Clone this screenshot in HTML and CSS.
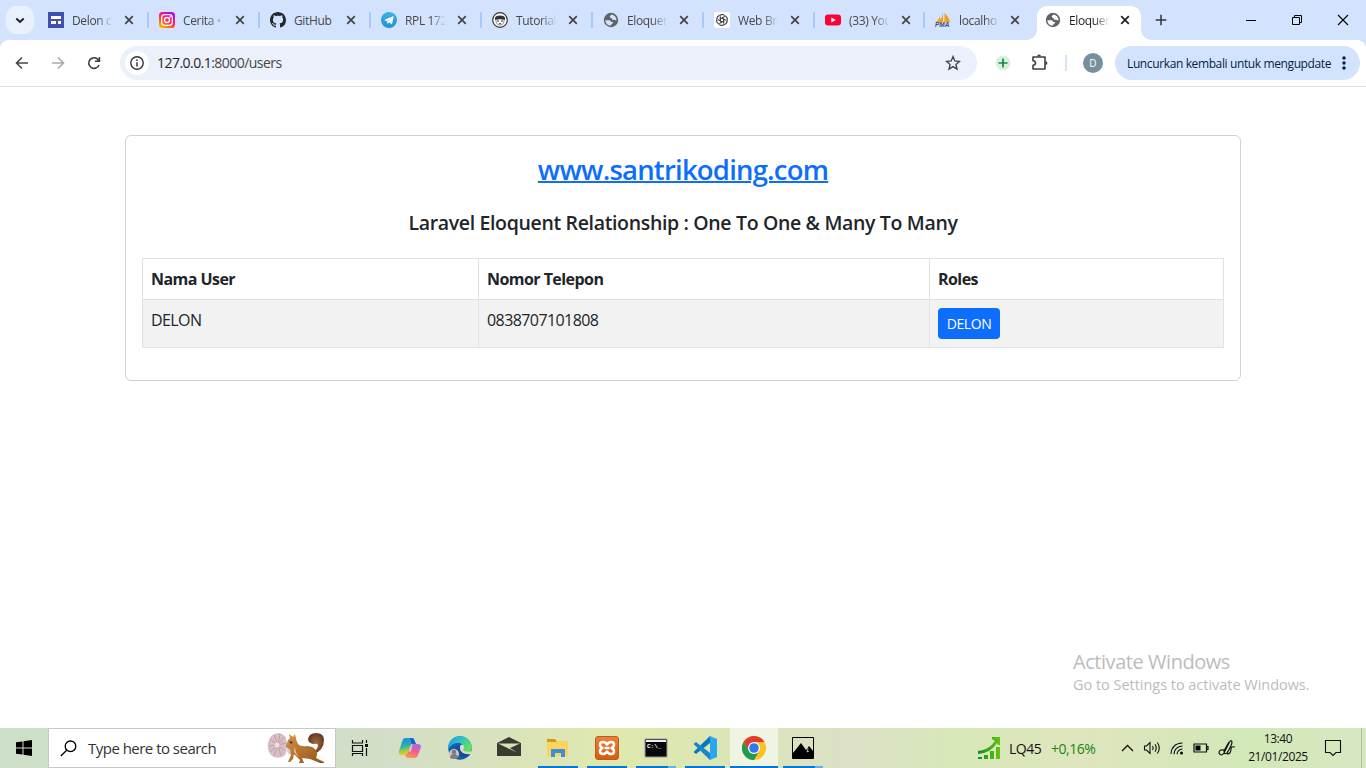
FILE: index.html
```html
<!DOCTYPE html>
<html lang="id">
<head>
<meta charset="utf-8">
<title>Eloquent</title>
<link rel="stylesheet" href="styles.css">
</head>
<body>
<svg class="defs" width="0" height="0">
  <defs>
    <symbol id="x" viewBox="0 0 10 10"><path d="M1.2 1.2l7.6 7.6M8.8 1.2L1.2 8.8" stroke="currentColor" stroke-width="1.7" fill="none"/></symbol>
    <symbol id="globe" viewBox="0 0 16 16"><circle cx="8" cy="8" r="7.200" fill="#5f6368"/><path d="M2.300 8.200h4c1.500 0 1.300 1.700 2.600 1.700h1.200v1.300c-1.500.2-1.800.7-1.800 2.400C4.500 13.700 2.600 11 2.300 8.200zM8.800 2.600c-1.200.8-1.900 1-2 2.200.2 1.200 1.700.8 2 1.900.2 1 .8 1.200 1.900 1.100 1-.1 1.300.9 2.900.4-.1-2.800-2.200-5-4.800-5.600z" fill="var(--hole,#d3e3fd)"/></symbol>
    <linearGradient id="ig" x1=".1" y1="1" x2=".7" y2="0"><stop offset="0" stop-color="#ffc700"/><stop offset=".35" stop-color="#ff5a20"/><stop offset=".65" stop-color="#ff1283"/><stop offset="1" stop-color="#a30df5"/></linearGradient>
    <linearGradient id="tg" x1="0" y1="0" x2="0" y2="1"><stop offset="0" stop-color="#3bb0e8"/><stop offset="1" stop-color="#1d93d2"/></linearGradient>
    <linearGradient id="cpa" x1="0" y1="0" x2=".2" y2="1"><stop offset="0" stop-color="#168be8"/><stop offset=".5" stop-color="#28b0b0"/><stop offset=".8" stop-color="#a7ce3b"/><stop offset="1" stop-color="#f5c62b"/></linearGradient>
    <linearGradient id="cpb" x1=".8" y1="0" x2=".4" y2="1"><stop offset="0" stop-color="#a06bea"/><stop offset=".5" stop-color="#ee5a96"/><stop offset="1" stop-color="#fb9549"/></linearGradient>
    <linearGradient id="ed" x1="0" y1="0" x2="1" y2=".5"><stop offset="0" stop-color="#1b9de2"/><stop offset=".5" stop-color="#2cc3c9"/><stop offset="1" stop-color="#69de58"/></linearGradient>
    <linearGradient id="fur" x1="0" y1="0" x2="1" y2="1"><stop offset="0" stop-color="#d99245"/><stop offset="1" stop-color="#8f5218"/></linearGradient>
    <radialGradient id="tail"><stop offset="0" stop-color="#a36c4a"/><stop offset="1" stop-color="#683b22"/></radialGradient>
    <linearGradient id="xa" x1="0" y1="0" x2="0" y2="1"><stop offset="0" stop-color="#ed8239"/><stop offset="1" stop-color="#dc590c"/></linearGradient>
    <linearGradient id="lq" x1="0" y1="0" x2="1" y2="0"><stop offset="0" stop-color="#138a2c"/><stop offset="1" stop-color="#67c50d"/></linearGradient>
  </defs>
</svg>

<div class="screen">
  <header class="tabstrip">
    <button class="tab-search"><svg width="10" height="7" viewBox="0 0 10 7"><path d="M1.300 1.500L5 5l3.700-3.500" fill="none" stroke="#1f1f1f" stroke-width="1.900"/></svg></button>
    <nav class="tabs">
      <div class="tab"><svg class="fav" viewBox="0 0 16 16"><path d="M0 0h16v16H0z" fill="#3f51b5"/><path d="M3 4h10v3H3zM3 9h5v3H3zM10 9h3v3h-3z" fill="#fff"/></svg><span class="tab-title">Delon c</span><svg class="close"><use href="#x"/></svg></div>
      <div class="tab"><svg class="fav" viewBox="0 0 16 16"><rect width="16" height="16" rx="3.600" fill="url(#ig)"/><rect x="2.700" y="2.700" width="10.600" height="10.600" rx="3" fill="none" stroke="#fff" stroke-width="1.300"/><circle cx="8" cy="8" r="2.500" fill="none" stroke="#fff" stroke-width="1.300"/><circle cx="11.100" cy="4.900" r=".8" fill="#fff"/></svg><span class="tab-title">Cerita •</span><svg class="close"><use href="#x"/></svg></div>
      <div class="tab"><svg class="fav" viewBox="0 0 16 16"><path fill="#24292f" d="M8 0C3.580 0 0 3.580 0 8c0 3.540 2.290 6.530 5.470 7.590.4.070.55-.17.55-.38 0-.19-.01-.82-.01-1.490-2.010.37-2.530-.49-2.690-.94-.09-.23-.48-.94-.82-1.130-.28-.15-.68-.52-.01-.53.63-.01 1.080.58 1.230.82.72 1.210 1.870.87 2.330.66.070-.52.28-.87.51-1.070-1.780-.2-3.640-.89-3.640-3.950 0-.87.31-1.590.82-2.150-.08-.2-.36-1.020.08-2.120 0 0 .67-.21 2.200.82.64-.18 1.320-.27 2-.27s1.360.09 2 .27c1.530-1.040 2.200-.82 2.200-.82.44 1.100.16 1.920.08 2.120.51.56.82 1.270.82 2.150 0 3.070-1.870 3.750-3.650 3.950.29.25.54.73.54 1.480 0 1.070-.01 1.930-.01 2.200 0 .21.150.46.550.38A8.010 8.010 0 0 0 16 8c0-4.420-3.580-8-8-8z"/></svg><span class="tab-title">GitHub</span><svg class="close"><use href="#x"/></svg></div>
      <div class="tab"><svg class="fav" viewBox="0 0 16 16"><circle cx="8" cy="8" r="8" fill="url(#tg)"/><path d="M3 8l9-3.700c.5-.1.700.2.600.6l-1.500 6.800c-.1.500-.5.600-.9.300L8 10.300 6.800 11.500c-.3.200-.5.100-.6-.2L5.700 9z" fill="#fff"/><path d="M5.700 9l4.900-3.200L7 9.300l-.5 2z" fill="#b7d9ec"/></svg><span class="tab-title">RPL 172</span><svg class="close"><use href="#x"/></svg></div>
      <div class="tab"><svg class="fav" viewBox="0 0 16 16"><circle cx="8" cy="8" r="7.300" fill="#fff" stroke="#333" stroke-width="1.200"/><path d="M3 8V5.800Q4 3.500 8 3.500t5 2.300V8Q8 6.600 3 8z" fill="#333"/><path d="M4 7v3q1 3.200 4 3.200T12 10V7" fill="none" stroke="#777" stroke-width=".8"/><path d="M5 9h2M9 9h2M7 11.700h2" stroke="#333" stroke-width="1"/></svg><span class="tab-title">Tutorial</span><svg class="close"><use href="#x"/></svg></div>
      <div class="tab"><svg class="fav" viewBox="0 0 16 16"><use href="#globe"/></svg><span class="tab-title">Eloquer</span><svg class="close"><use href="#x"/></svg></div>
      <div class="tab"><svg class="fav" viewBox="0 0 16 16"><rect width="16" height="16" rx="2.500" fill="#fff"/><g fill="none" stroke="#333" stroke-width=".75"><path id="petal" d="M6.300 9V4.600a2.200 2.200 0 0 1 4.100-1.100M6.300 7l3.600-2.100"/><use href="#petal" transform="rotate(60 8 8)"/><use href="#petal" transform="rotate(120 8 8)"/><use href="#petal" transform="rotate(180 8 8)"/><use href="#petal" transform="rotate(240 8 8)"/><use href="#petal" transform="rotate(300 8 8)"/><circle cx="8" cy="8" r="5.400"/></g></svg><span class="tab-title">Web Br</span><svg class="close"><use href="#x"/></svg></div>
      <div class="tab"><svg class="fav" viewBox="0 0 16 16"><rect y="2.400" width="16" height="11.200" rx="3" fill="#f03"/><path d="M6.300 5.500v5L10.800 8z" fill="#fff"/></svg><span class="tab-title">(33) You</span><svg class="close"><use href="#x"/></svg></div>
      <div class="tab"><svg class="fav" viewBox="0 0 16 16"><path d="M8 .5v9.800H2.500Q7 7 8 .5zM5 4v6H.7Q4 8 5 4zM9.500 1q4.500 4 5.500 9.300H9.500z" fill="#f89c1c"/><text x="0" y="15.300" class="pma">PMA</text></svg><span class="tab-title">localho</span><svg class="close"><use href="#x"/></svg></div>
      <div class="tab active"><svg class="fav" viewBox="0 0 16 16"><use href="#globe"/></svg><span class="tab-title">Eloquer</span><svg class="close"><use href="#x"/></svg></div>
    </nav>
    <svg class="newtab" width="12" height="12" viewBox="0 0 12 12"><path d="M6 .7v10.600M.7 6h10.600" stroke="#333639" stroke-width="1.500"/></svg>
    <div class="winctl">
      <svg width="12" height="12" viewBox="0 0 12 12"><path d="M1 6.500h10" stroke="#000"/></svg>
      <svg width="12" height="12" viewBox="0 0 12 12"><path d="M1.500 3.500h7v7h-7zM3.500 3.500v-2h7v7h-2" fill="none" stroke="#000"/></svg>
      <svg width="12" height="12" viewBox="0 0 12 12"><path d="M1 1l10 10M11 1L1 11" stroke="#000" stroke-width="1.100"/></svg>
    </div>
  </header>

  <div class="toolbar">
    <div class="navbtns">
      <svg width="14" height="14" viewBox="0 0 14 14"><path d="M13 7H1.800M7 1.500L1.500 7 7 12.500" fill="none" stroke="#474747" stroke-width="1.600"/></svg>
      <svg width="14" height="14" viewBox="0 0 14 14"><path d="M1 7h11.200M7 1.500L12.500 7 7 12.500" fill="none" stroke="#aaa" stroke-width="1.600"/></svg>
      <svg width="14" height="14" viewBox="0 0 14 14"><path d="M12 9a5.300 5.300 0 1 1-.8-5.200L12.300 5M12.400 1v4.300H8" fill="none" stroke="#3c3c3c" stroke-width="1.600"/></svg>
    </div>
    <div class="omnibox">
      <span class="info"><svg width="14" height="14" viewBox="0 0 14 14"><circle cx="7" cy="7" r="6.200" fill="none" stroke="#333" stroke-width="1.400"/><path d="M7 6.200v4.300M7 3.400v1.500" stroke="#333" stroke-width="1.500"/></svg></span>
      <span class="url"><b>127.0.0.1</b>:8000/users</span>
      <svg class="star" width="16" height="16" viewBox="0 0 16 16"><path d="M8 1.600l1.800 4.400 4.700.4-3.600 3.100 1.100 4.600L8 11.600l-4 2.500 1.100-4.600L1.500 6.400 6.200 6z" fill="none" stroke="#3c4043" stroke-width="1.300"/></svg>
    </div>
    <svg class="ext" width="16" height="16" viewBox="0 0 16 16"><circle cx="8" cy="8" r="7.500" fill="#dbf0d9"/><path d="M8 3.500v9M3.500 8h9" stroke="#0f8a50" stroke-width="1.700"/></svg>
    <svg class="puzzle" width="18" height="18" viewBox="0 0 18 18"><path d="M2 3h12v12H2v-3.800q2.500-.3 2.500-2.200T2 6.800z" fill="none" stroke="#3c4043" stroke-width="1.600" stroke-linejoin="round"/><path d="M6.200 2.500a1.900 1.900 0 0 1 3.800 0zM14.500 7.200a1.900 1.900 0 0 1 0 3.800z" fill="#3c4043"/></svg>
    <span class="vline"></span>
    <span class="avatar">D</span>
    <button class="relaunch"><span>Luncurkan kembali untuk mengupdate</span><svg width="4" height="14" viewBox="0 0 4 14"><g fill="#041e49"><circle cx="2" cy="2" r="1.700"/><circle cx="2" cy="7" r="1.700"/><circle cx="2" cy="12" r="1.700"/></g></svg></button>
  </div>

  <main class="page">
    <section class="card">
      <h3 class="brand"><a href="#">www.santrikoding.com</a></h3>
      <h5 class="subtitle">Laravel Eloquent Relationship : One To One &amp; Many To Many</h5>
      <table class="users">
        <colgroup><col class="c1"><col class="c2"><col class="c3"></colgroup>
        <thead><tr><th>Nama User</th><th>Nomor Telepon</th><th>Roles</th></tr></thead>
        <tbody><tr><td>DELON</td><td>0838707101808</td><td><button class="role">DELON</button></td></tr></tbody>
      </table>
    </section>
    <aside class="watermark"><p class="wm-title">Activate Windows</p><p class="wm-text">Go to Settings to activate Windows.</p></aside>
  </main>

  <footer class="taskbar">
    <div class="start"><svg width="16" height="16" viewBox="0 0 16 16"><path d="M0 2.300L6.500 1.400v6.100H0zM7.500 1.200L16 0v7.500H7.500zM0 8.500h6.500v6.100L0 13.700zM7.500 8.500H16V16l-8.500-1.200z"/></svg></div>
    <div class="search">
      <svg width="17" height="17" viewBox="0 0 17 17"><circle cx="10.500" cy="6.300" r="5.300" fill="none" stroke="#000" stroke-width="1.300"/><path d="M6.700 10.200L.8 16" stroke="#000" stroke-width="1.300"/></svg>
      <span class="search-text">Type here to search</span>
      <svg class="squirrel" width="60" height="34" viewBox="0 0 60 34">
        <ellipse cx="26" cy="20" rx="6" ry="4" fill="#d9c1d8"/>
        <path d="M12 2q8 1 8 12t-5 12q-7 2-11-2-4-5-3-12Q3 2 12 2z" fill="#d8bfc4"/>
        <path d="M11 14L3 8M11 14L7 4M11 14l2-11M11 14l6-8M11 14l8-2M11 14l7 6M11 14l3 11M11 14L7 25M11 14l-8 7M11 14l-9 1" stroke="#b795a1" stroke-width=".8"/><circle cx="10" cy="14" r="2.500" fill="#eee0df"/>
        <path d="M45 21q6-2 6-7-1-2-5-1-5-1-5-5 1-6 8-6 8 0 8 7 0 10-10 14z" fill="url(#tail)"/>
        <path d="M20 12l1-3 2-2-1-4 4 3 2-3 1 5q1 4 3 6 4 2 8 1 8 0 10 7 0 4-1 5l8 4v1h-4l-10-4-8-1 2 5h-5l1-3-6-6-1 5-3 3h-2l3-7-1-6q-4 0-4-4z" fill="url(#fur)"/><path d="M28 16q0 8 6 10-5-1-7-6z" fill="#f2d4a5"/><path d="M22 10l4 1-2 2z" fill="#273064"/>
      </svg>
    </div>
    <div class="apps">
      <span class="app w48"><svg width="24" height="24" viewBox="0 0 24 24"><path d="M4.500 4v3h10V4M4.500 20v-2.500h10V20M4.500 9.500h10v6h-10zM18.500 4v3M18.500 12v8" fill="none" stroke="#111" stroke-width="1.200"/><path d="M17 8h3v3h-3z" fill="#111"/></svg></span>
      <span class="app w52"><svg width="24" height="24" viewBox="0 0 24 24"><path d="M8 2h6q2 0 2.700 3L18 8h-3q-2 0-3 3l-2 5q-1 3-3 3H4q-4 0-3-4L4.300 5Q5 2 8 2z" fill="url(#cpa)"/><path d="M12 2h2q2 0 2.700 3L18 8h-4.500z" fill="#1962c7"/><path d="M16 22h-5q-3 0-4-3 2 0 3-3l2-5q1-3 3-3h4q5 0 3.700 4l-2.700 7q-1 3-4 3z" fill="url(#cpb)"/><path d="M10.500 15.500l2-5.500q.7-2 2-2l-1.500 7.500z" fill="#d9e1c5" opacity=".85"/></svg></span>
      <span class="app"><svg width="24" height="24" viewBox="0 0 24 24"><circle cx="12" cy="12" r="11.800" fill="#105db5"/><path d="M.4 10C2-2 22-4 24 11q0 6-7 5-4-1-2-4 1-4-4-5Q4 6 .4 13z" fill="url(#ed)"/><path d="M8 10q-3 8 6 11 4 1 8-2l-1-3q-7 2-8-3-.5-2 1-3z" fill="#194e97"/><path d="M12 10q2-3 4 0 1 2-1 4 2 3 9 1l-1 3q-10 1-11-5z" fill="#d4dfbd"/><circle cx="6" cy="18" r="5" fill="#c9cac8"/><circle cx="6" cy="16" r="2.300" fill="#807b78"/><path d="M2 22q0-4 4-4t4 4q-4 2-8 0z" fill="#807b78"/></svg></span>
      <span class="app mail"><svg width="24" height="20" viewBox="0 0 24 20"><path d="M0 6L12 0l12 6v13H0z" fill="#3a3b30"/><path d="M1 6.500h22L13 11l7 4.500z" fill="#d7e1b6"/></svg></span>
      <span class="app open"><svg width="24" height="24" viewBox="0 0 24 24"><path d="M1 3h8l2 3H1z" fill="#d99c08"/><path d="M1 6h10l1-1h10v15H1z" fill="#fdd35f"/><path d="M5 21v-8h14v8h-4v-4H9v4z" fill="#3b91d8"/></svg></span>
      <span class="app open"><svg width="24" height="24" viewBox="0 0 24 24"><rect x=".5" y=".5" width="23" height="23" rx="2.500" fill="url(#xa)" stroke="#b65e28"/><path d="M7.500 12Q5 11 5 8.700 5 6 8 6q2.500 0 4 2.500Q13.500 6 16 6q3 0 3 2.700 0 2.300-2.500 3.300 2.500 1 2.500 3.300 0 2.700-3 2.700-2.500 0-4-2.500Q10.500 18 8 18q-3 0-3-2.700Q5 13 7.500 12zM9.500 12h5" fill="none" stroke="#fff" stroke-width="2.500" stroke-linejoin="round"/></svg></span>
      <span class="app open multi"><svg width="24" height="24" viewBox="0 0 24 24"><path d="M1 3h22v18H1z" fill="#090909" stroke="#999"/><path d="M2 4h20v2H2z" fill="#eee"/><text x="3" y="12" class="cmd">C:\_</text></svg></span>
      <span class="app open"><svg width="24" height="24" viewBox="0 0 24 24"><path d="M17 0v7L3 18 .5 16z" fill="#0879bd"/><path d="M17 24v-7L3 6 .5 8z" fill="#1687ca"/><path d="M17 0l7 3v18l-7 3z" fill="#29a6ed"/></svg></span>
      <span class="app open current"><svg width="24" height="24" viewBox="0 0 24 24"><circle cx="12" cy="12" r="12" fill="#fcc31e"/><path d="M1.600 6A12 12 0 0 1 22.400 6H12L7 15z" fill="#e33b2e"/><path d="M1.600 6A12 12 0 0 0 12 24l5.200-9H7z" fill="#229a4b"/><circle cx="12" cy="12" r="6" fill="#fff"/><circle cx="12" cy="12" r="4.800" fill="#3078ed"/></svg></span>
      <span class="app open multi"><svg width="24" height="24" viewBox="0 0 24 24"><path d="M1.500 1.500h21v21h-21z" fill="none" stroke="#000"/><path d="M2 17l8-10 5 7 3-4 4 5v7H2z"/><path d="M16 11q2 1 0 5l2-1" fill="none" stroke="#d9e4b8" stroke-width=".8"/></svg></span>
    </div>
    <div class="stock">
      <svg width="24" height="24" viewBox="0 0 24 24"><path d="M1 15Q12 14 18 5l-3-2V1h8v8h-2l-1-2Q14 17 1 18z" fill="url(#lq)"/><path d="M1 21h4v2H1zM7 19h4v4H7zM13 15h4v8h-4zM19 11h4v12h-4z" fill="url(#lq)"/></svg>
      <span class="lq">LQ45</span><span class="pct">+0,16%</span>
    </div>
    <div class="tray">
      <svg width="13" height="8" viewBox="0 0 13 8"><path d="M1 7l5.500-5.500L12 7" fill="none" stroke="#111" stroke-width="1.300"/></svg>
      <svg width="18" height="14" viewBox="0 0 18 14"><path d="M1.500 5h2L7 1.500v11L3.500 9h-2zM9.500 5q1.300 2 0 4M12 3.300q2.500 3.700 0 7.400M14.300 1.500q4 5.500 0 11" fill="none" stroke="#111" stroke-width="1.100"/></svg>
      <svg width="14" height="14" viewBox="0 0 14 14"><path d="M1 13Q1.500 2.500 12.500 2M4 13.300Q4.500 5.500 12.500 5M7 13.300Q7.500 8.500 12.500 8" fill="none" stroke="#111" stroke-width="1.100"/><circle cx="11.500" cy="12" r="1.500"/></svg>
      <svg width="16" height="10" viewBox="0 0 16 10"><path d="M1 1h12.500v8H1zM13.500 3.500H15v3h-1.500" fill="none" stroke="#111" stroke-width="1.200"/><path d="M2.500 2.500h5v5h-5z"/></svg>
      <svg width="18" height="18" viewBox="0 0 18 18"><path d="M6 11q-5-1-5 3 2 4 5 0l5-10q2-4 3-1 0 3-5 11-3 2-3-2l5-9M9 15q4 0 4-5 0-3 4-2" fill="none" stroke="#111" stroke-width="1.200"/></svg>
    </div>
    <div class="clock"><span class="time">13:40</span><span class="date">21/01/2025</span></div>
    <svg class="notice" width="18" height="18" viewBox="0 0 18 18"><path d="M1.500 1.500h15v12H12l-3 3-3-3H1.500z" fill="none" stroke="#111" stroke-width="1.100"/></svg>
    <span class="peek"></span>
  </footer>
</div>
</body>
</html>
```
FILE: styles.css
```css
* { box-sizing: border-box; }
body { margin: 0; background: #fff; font-family: "Open Sans", "Noto Sans", sans-serif; color: #212529; }
button { font: inherit; border: 0; padding: 0; }
p { margin: 0; }
svg { display: block; flex: none; }
.defs { position: absolute; }
.screen { width: 1366px; height: 768px; display: flex; flex-direction: column; overflow: hidden; }

.tabstrip { height: 40px; flex: none; display: flex; background: #d3e3fd; }
.tab-search { width: 28px; height: 28px; margin: 6px 3px 0 6px; border-radius: 10px; background: #e9f0fe; display: grid; place-items: center; }
.tabs { display: flex; }
.tab { width: 111px; height: 40px; display: flex; align-items: center; padding-left: 11px; position: relative; font-size: 12px; color: #474747; }
.tab:nth-child(8), .tab:nth-child(9) { width: 110px; }
.tab:not(.active)::after { content: ""; position: absolute; right: -1px; top: 12px; width: 2px; height: 16px; background: #a8c7fa; }
.tab:nth-child(9)::after { display: none; }
.fav { width: 16px; height: 16px; overflow: visible; }
.pma { font: italic bold 6.500px "Liberation Sans", sans-serif; fill: #444a78; }
.tab-title { width: 42px; margin: 1px 7px 0 8px; overflow: hidden; white-space: nowrap; letter-spacing: -.35px; line-height: 18px; -webkit-mask-image: linear-gradient(90deg, #000 60%, transparent 97%); mask-image: linear-gradient(90deg, #000 60%, transparent 97%); }
.tab:nth-child(3) .tab-title { -webkit-mask-image: none; mask-image: none; }
.close { width: 10px; height: 10px; color: #444; margin-left: 3px; }
.tab:nth-child(9) .close { margin-left: 2px; }
.tab.active { --hole: #fff; width: 104px; height: 34px; margin: 6px 0 0 3px; padding: 0 0 6px 8px; border-radius: 10px 10px 0 0; background: #fff; color: #1f1f1f; }
.tab.active .close { color: #1f1f1f; margin-left: 2px; }
.tab.active::before, .tab.active::after { content: ""; position: absolute; bottom: 0; width: 10px; height: 10px; }
.tab.active::before { left: -10px; background: radial-gradient(circle at 0 0, transparent 9.500px, #fff 10px); }
.tab.active::after { right: -10px; background: radial-gradient(circle at 100% 0, transparent 9.500px, #fff 10px); }
.newtab { margin: 14px 0 0 14px; }
.winctl { margin: 14px 17px 0 auto; display: flex; gap: 34px; }

.toolbar { height: 47px; flex: none; display: flex; align-items: center; border-bottom: 1px solid #dfe1e5; background: radial-gradient(circle at 8px 8px, #fff 7.500px, #d3e3fd 8px) 0 0 / 8px 8px no-repeat, radial-gradient(circle at 0 8px, #fff 7.500px, #d3e3fd 8px) 100% 0 / 8px 8px no-repeat; }
.navbtns { display: flex; gap: 22px; padding-left: 15px; width: 120px; }
.omnibox { width: 857px; height: 34px; border-radius: 17px; background: #ebf0fa; display: flex; align-items: center; padding: 0 16px 0 5px; }
.info { width: 24px; height: 24px; border-radius: 50%; background: #fff; display: grid; place-items: center; }
.url { margin-left: 8px; font-size: 14px; letter-spacing: -.54px; color: #474747; line-height: 20px; }
.url b { font-weight: 400; color: #1f1f1f; }
.star { margin-left: auto; }
.ext { margin-left: 18px; }
.puzzle { margin-left: 20px; }
.vline { width: 2px; height: 16px; margin-left: 16px; background: #d3e3fd; }
.avatar { width: 20px; height: 20px; margin-left: 16px; border-radius: 50%; background: #78909c; color: #fff; font-size: 10px; line-height: 20px; text-align: center; }
.relaunch { width: 245px; height: 34px; margin-left: 12px; padding: 0 14px 0 12px; border-radius: 17px; background: #d3e3fd; color: #041e49; font-size: 12px; letter-spacing: -.38px; white-space: nowrap; display: flex; align-items: center; justify-content: space-between; }

.page { flex: 1; display: flex; flex-direction: column; justify-content: space-between; padding: 48px 57px 33px 125px; }
.card { width: 1116px; height: 246px; border: 1px solid #d0d1d3; border-radius: 6px; padding: 16px; text-align: center; }
.brand { margin: 1px 0 17px; font-size: 27.500px; line-height: 34px; font-weight: 600; letter-spacing: -.8px; }
.brand a { color: #0d6efd; text-decoration-thickness: 2px; }
.subtitle { margin: 0 0 18px; padding-top: 2px; font-size: 19.500px; line-height: 34px; font-weight: 600; letter-spacing: -.34px; white-space: nowrap; }
.users { width: 1082px; table-layout: fixed; border-collapse: collapse; text-align: left; font-size: 16px; line-height: 24px; }
.c1 { width: 336px; }
.c2 { width: 451px; }
.users th, .users td { border: 1px solid #dee2e6; padding: 8px; vertical-align: top; }
.users th { font-weight: 700; letter-spacing: -.55px; }
.users td { background: #f2f2f2; letter-spacing: -.58px; }
.role { display: block; height: 31px; width: 62px; border-radius: 4px; background: #0d6efd; color: #fff; font-size: 14px; letter-spacing: -.4px; line-height: 31px; }
.watermark { align-self: flex-end; width: 236px; color: #bcbcbc; white-space: nowrap; }
.wm-title { font-size: 20px; line-height: 26px; letter-spacing: -.45px; }
.wm-text { font-size: 14.500px; line-height: 20px; letter-spacing: -.03px; }

.taskbar { height: 40px; flex: none; display: flex; align-items: center; color: #111; background: linear-gradient(90deg, #cddfc8 0, #d2dec8 28%, #d8e2bd 36%, #dfe9ad 45%, #d9e5b8 55%, #dce0c7 62%, #d7e8b8 70%, #dfe5bd 79%, #d2e8b8 91%, #d6e8c0 100%); }
.start { width: 48px; display: grid; place-items: center; }
.search { width: 288px; height: 40px; border: 1px solid #c8c8c8; background: #fff; display: flex; align-items: center; padding-left: 11px; }
.search-text { margin-left: 11px; width: 180px; font-size: 15px; letter-spacing: -.52px; color: #333; white-space: nowrap; }
.squirrel { margin-left: -1px; }
.apps { display: flex; height: 40px; }
.app { position: relative; width: 49px; height: 40px; display: grid; place-items: center; padding-right: 1px; }
.app.w48 { width: 48px; padding-right: 0; }
.app.w52 { width: 52px; padding-right: 0; }
.app.mail { padding-bottom: 3px; }
.app.open::after { content: ""; position: absolute; left: 4px; bottom: 0; width: 40px; height: 2px; background: #0078d7; }
.app.multi::after { background: linear-gradient(90deg, #0078d7 80%, #6cafe3 80%); }
.app.current { background: linear-gradient(#f0f4e2, #f0f4e2) 0 0 / 48px 40px no-repeat; }
.app.current::after { left: 0; width: 48px; }
.cmd { font: bold 6px "Liberation Mono", monospace; fill: #fff; }
.stock { margin-left: auto; display: flex; align-items: center; font-size: 14px; letter-spacing: -.5px; }
.lq { width: 32px; margin-left: 8px; }
.pct { width: 47px; margin-left: 10px; color: #16851b; }
.tray { display: flex; align-items: center; gap: 9px; margin-left: 23px; }
.clock { width: 60px; margin-left: 12px; display: flex; flex-direction: column; align-items: center; font-size: 12px; line-height: 18px; letter-spacing: -.4px; }
.notice { margin: 0 19px 0 16px; }
.peek { width: 5px; height: 40px; border-left: 1px solid #b0c29b; }
```
